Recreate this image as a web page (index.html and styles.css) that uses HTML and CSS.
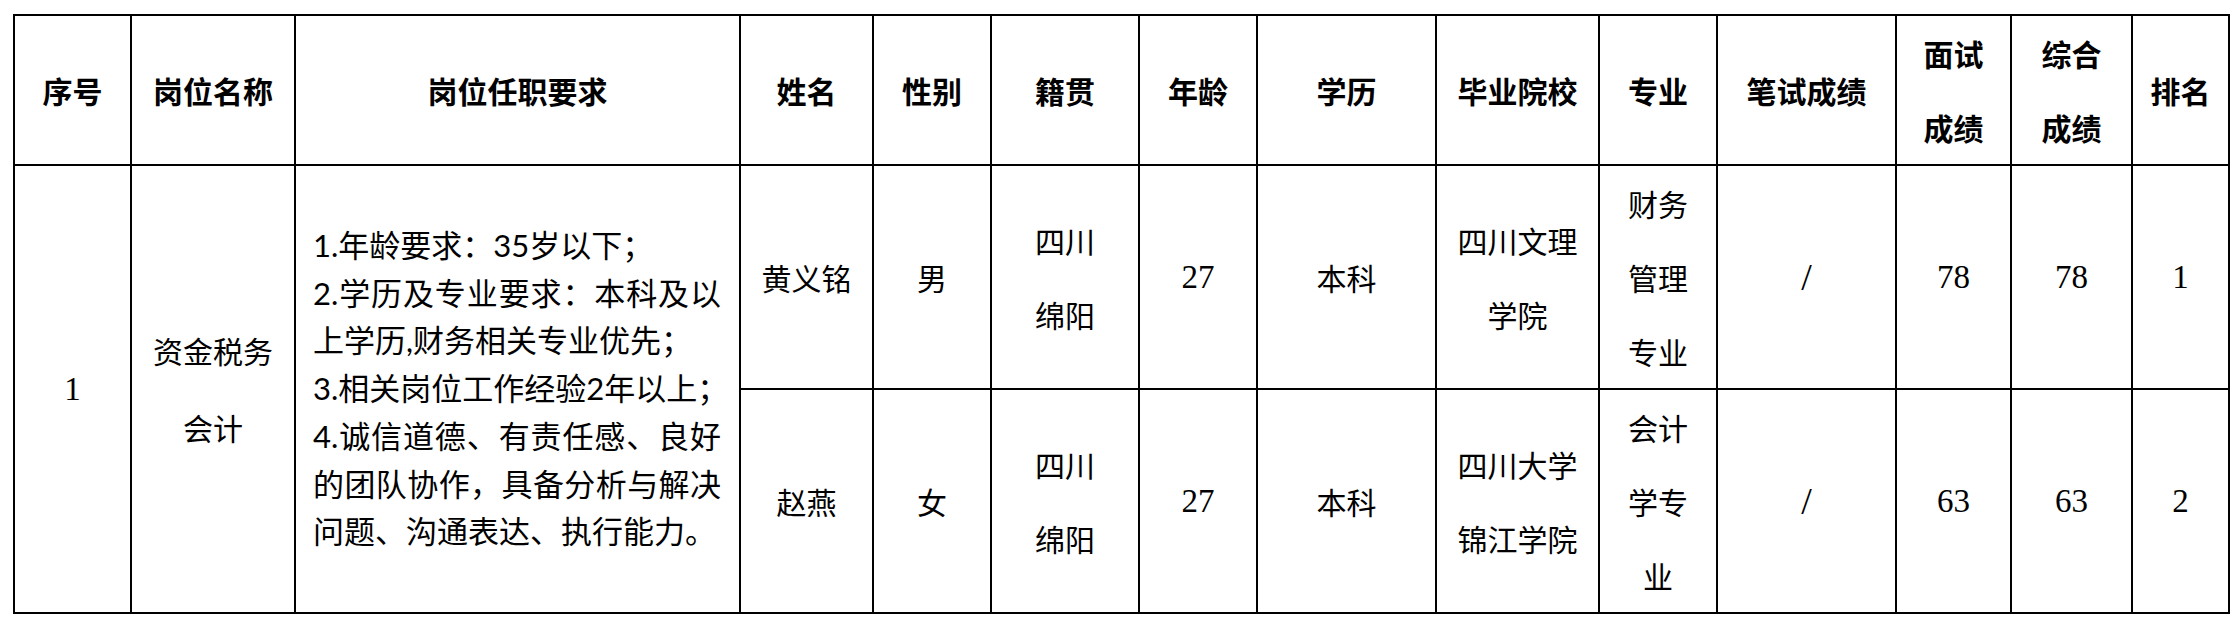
FILE: index.html
```html
<!DOCTYPE html>
<html lang="zh-CN">
<head>
<meta charset="utf-8">
<title>岗位成绩表</title>
<link rel="stylesheet" href="styles.css">
</head>
<body>
<div class="sheet">
  <div class="cell head">序号</div>
  <div class="cell head">岗位名称</div>
  <div class="cell head">岗位任职要求</div>
  <div class="cell head">姓名</div>
  <div class="cell head">性别</div>
  <div class="cell head">籍贯</div>
  <div class="cell head">年龄</div>
  <div class="cell head">学历</div>
  <div class="cell head">毕业院校</div>
  <div class="cell head">专业</div>
  <div class="cell head">笔试成绩</div>
  <div class="cell head multi">面试<br>成绩</div>
  <div class="cell head multi">综合<br>成绩</div>
  <div class="cell head">排名</div>

  <div class="cell span2 num">1</div>
  <div class="cell span2 post">资金税务<br>会计</div>
  <div class="cell span2 req">
    <div class="req-text">
      <div class="rl">1.年龄要求：35岁以下；</div>
      <div class="rl jl">2.学历及专业要求：本科及以</div>
      <div class="rl">上学历,财务相关专业优先；</div>
      <div class="rl">3.相关岗位工作经验2年以上；</div>
      <div class="rl jl">4.诚信道德、有责任感、良好</div>
      <div class="rl jl">的团队协作，具备分析与解决</div>
      <div class="rl">问题、沟通表达、执行能力。</div>
    </div>
  </div>

  <div class="cell">黄义铭</div>
  <div class="cell">男</div>
  <div class="cell multi">四川<br>绵阳</div>
  <div class="cell num">27</div>
  <div class="cell">本科</div>
  <div class="cell multi">四川文理<br>学院</div>
  <div class="cell multi">财务<br>管理<br>专业</div>
  <div class="cell num slash">/</div>
  <div class="cell num">78</div>
  <div class="cell num">78</div>
  <div class="cell num">1</div>

  <div class="cell">赵燕</div>
  <div class="cell">女</div>
  <div class="cell multi">四川<br>绵阳</div>
  <div class="cell num">27</div>
  <div class="cell">本科</div>
  <div class="cell multi">四川大学<br>锦江学院</div>
  <div class="cell multi">会计<br>学专<br>业</div>
  <div class="cell num slash">/</div>
  <div class="cell num">63</div>
  <div class="cell num">63</div>
  <div class="cell num">2</div>
</div>
</body>
</html>
```
FILE: styles.css
```css
html, body {
  margin: 0;
  padding: 0;
  background: #ffffff;
}

body {
  font-family: "Noto Sans CJK SC", "Noto Sans", sans-serif;
  color: #000000;
}

.sheet {
  display: grid;
  grid-template-columns: 117px 164px 445px 133px 118px 148px 118px 179px 163px 118px 179px 115px 121px 97px;
  grid-template-rows: 150px 224px 224px;
  width: max-content;
  margin: 14px 0 0 13px;
  border-left: 2px solid #000;
  border-top: 2px solid #000;
}

.cell {
  box-sizing: border-box;
  border-right: 2px solid #000;
  border-bottom: 2px solid #000;
  display: flex;
  align-items: center;
  justify-content: center;
  text-align: center;
  font-size: 30px;
  line-height: 40px;
  font-weight: 400;
}

.head {
  font-weight: 700;
}

.multi {
  line-height: 74px;
}

.span2 {
  grid-row: span 2;
}

.num {
  font-family: "Liberation Serif", "Noto Sans CJK SC", serif;
  font-size: 33px;
}

.slash {
  font-size: 38px;
  font-weight: 300;
}

.post {
  line-height: 77px;
}

.req {
  justify-content: flex-start;
  padding: 0 18px 0 17px;
}

.req-text {
  width: 408px;
  font-family: "Lato", "Noto Sans CJK SC", sans-serif;
  font-size: 31px;
  line-height: 47.8px;
  text-align: left;
}

.rl {
  text-align: left;
  white-space: nowrap;
}

.jl {
  white-space: normal;
  text-align: justify;
  text-align-last: justify;
}
```
